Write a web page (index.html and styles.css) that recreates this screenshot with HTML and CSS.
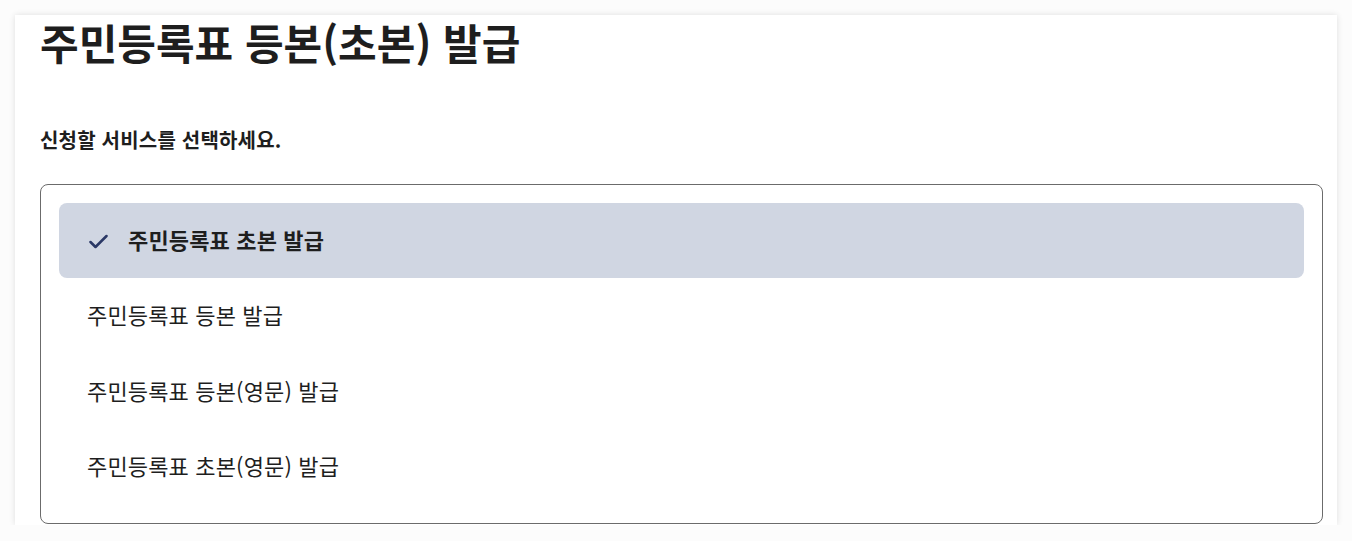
FILE: index.html
```html
<!DOCTYPE html>
<html lang="ko">
<head>
<meta charset="utf-8">
<title>주민등록표 등본(초본) 발급</title>
<link rel="stylesheet" href="styles.css">
</head>
<body>
<div class="page">
  <main class="card">
    <h1 class="title">주민등록표 등본(초본) 발급</h1>
    <p class="lead">신청할 서비스를 선택하세요.</p>
    <ul class="listbox" role="listbox">
      <li class="option selected" role="option" aria-selected="true">
        <svg class="check" width="20" height="20" viewBox="0 0 20 20" aria-hidden="true"><path d="M2.5 11l5 5L18.5 5" fill="none" stroke="currentColor" stroke-width="2.5" stroke-linecap="round" stroke-linejoin="round"/></svg>
        <span>주민등록표 초본 발급</span>
      </li>
      <li class="option" role="option">주민등록표 등본 발급</li>
      <li class="option" role="option">주민등록표 등본(영문) 발급</li>
      <li class="option" role="option">주민등록표 초본(영문) 발급</li>
    </ul>
  </main>
</div>
</body>
</html>
```

FILE: styles.css
```css
html, body {
  margin: 0;
  padding: 0;
  background: #fcfcfc;
}
body {
  font-family: "Noto Sans CJK KR", "Noto Sans", sans-serif;
  color: #1e1e1e;
}
.page {
  padding: 15px 15px 0 15px;
}
.card {
  background: #fff;
  box-shadow: 0 0 6px rgba(0, 0, 0, 0.12);
  padding: 0 14px 1px 25px;
}
.title {
  margin: 0;
  font-size: 42px;
  font-weight: 700;
  line-height: 54px;
  color: #1e1e1e;
}
.lead {
  margin: 57px 0 0 0;
  font-size: 20px;
  font-weight: 700;
  line-height: 28px;
  letter-spacing: 0.2px;
}
.listbox {
  list-style: none;
  margin: 30px 0 0 0;
  padding: 18px;
  border: 1px solid #6b6b6b;
  border-radius: 8px;
}
.option {
  display: flex;
  align-items: center;
  gap: 20px;
  height: 75px;
  padding: 0 28px 4px 28px;
  box-sizing: border-box;
  font-size: 22px;
  letter-spacing: 0.15px;
  color: #1e1e1e;
  border-radius: 8px;
}
.option:nth-child(even) {
  height: 76px;
}
.option.selected {
  background: #d0d6e2;
  font-weight: 700;
  padding-left: 29px;
}
.check {
  color: #2a3866;
  flex: none;
  margin-top: 4px;
}
```
